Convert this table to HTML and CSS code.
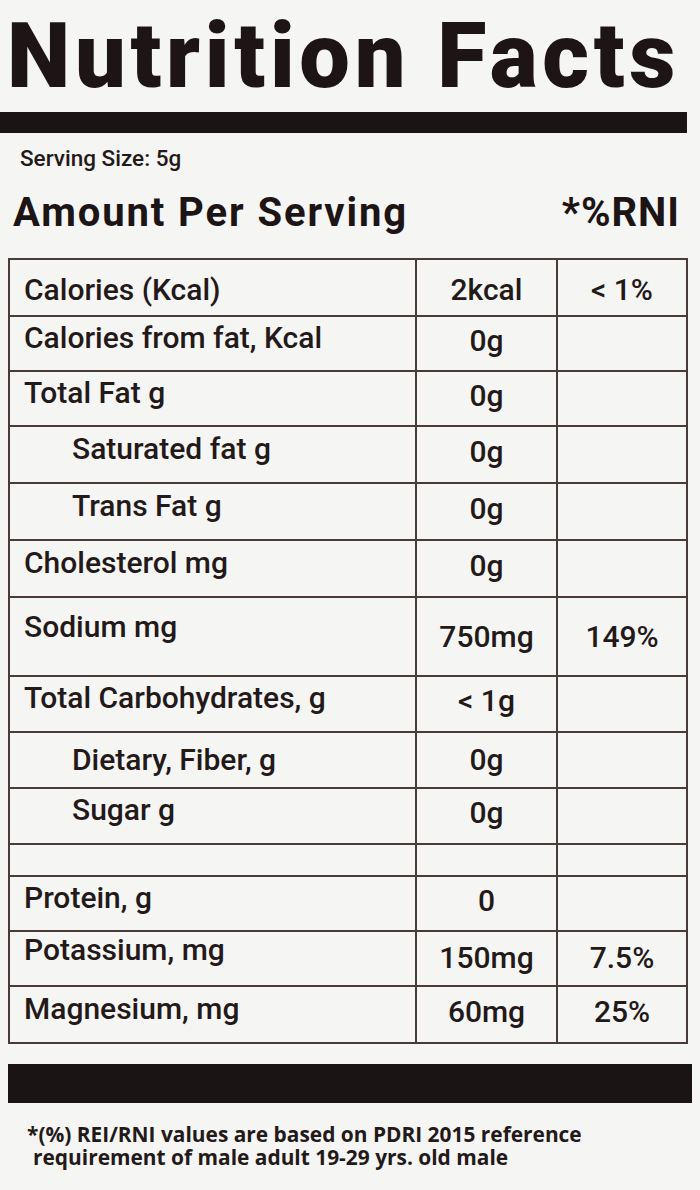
FILE: index.html
```html
<!DOCTYPE html>
<html lang="en">
<head>
<meta charset="utf-8">
<title>Nutrition Facts</title>
<link rel="stylesheet" href="styles.css">
</head>
<body>
<div class="label">
  <h1 class="title">Nutrition Facts</h1>
  <div class="bar bar-top"></div>
  <div class="serving">Serving Size: 5g</div>
  <div class="amount">
    <span>Amount Per Serving</span>
    <span class="rni">*%RNI</span>
  </div>

  <div class="table">
    <div class="row r1"><div class="name">Calories (Kcal)</div><div class="val">2kcal</div><div class="pct">&lt; 1%</div></div>
    <div class="row r2"><div class="name">Calories from fat, Kcal</div><div class="val">0g</div><div class="pct"></div></div>
    <div class="row r3"><div class="name">Total Fat g</div><div class="val">0g</div><div class="pct"></div></div>
    <div class="row r4"><div class="name sub">Saturated fat g</div><div class="val">0g</div><div class="pct"></div></div>
    <div class="row r5"><div class="name sub">Trans Fat g</div><div class="val">0g</div><div class="pct"></div></div>
    <div class="row r6"><div class="name">Cholesterol mg</div><div class="val">0g</div><div class="pct"></div></div>
    <div class="row r7"><div class="name">Sodium mg</div><div class="val">750mg</div><div class="pct">149%</div></div>
    <div class="row r8"><div class="name">Total Carbohydrates, g</div><div class="val">&lt; 1g</div><div class="pct"></div></div>
    <div class="row r9"><div class="name sub">Dietary, Fiber, g</div><div class="val">0g</div><div class="pct"></div></div>
    <div class="row r10"><div class="name sub">Sugar g</div><div class="val">0g</div><div class="pct"></div></div>
    <div class="row r11"><div class="name"></div><div class="val"></div><div class="pct"></div></div>
    <div class="row r12"><div class="name">Protein, g</div><div class="val">0</div><div class="pct"></div></div>
    <div class="row r13"><div class="name">Potassium, mg</div><div class="val">150mg</div><div class="pct">7.5%</div></div>
    <div class="row r14"><div class="name">Magnesium, mg</div><div class="val">60mg</div><div class="pct">25%</div></div>
  </div>

  <div class="bar bar-bottom"></div>
  <div class="note">
    <div class="note-line first">*(%) REI/RNI values are based on PDRI 2015 reference</div>
    <div class="note-line">requirement of male adult 19-29 yrs. old male</div>
  </div>
</div>
</body>
</html>
```

FILE: styles.css
```css
html, body {
  margin: 0;
  padding: 0;
  background: #f5f5f4;
}

body {
  width: 700px;
  height: 1190px;
  overflow: hidden;
  color: #231919;
  font-family: Roboto, "Liberation Sans", Arial, sans-serif;
}

.label {
  display: flex;
  flex-direction: column;
}

.title {
  margin: 12px 0 0 7px;
  font-size: 90px;
  line-height: 90px;
  font-weight: 900;
  letter-spacing: 4.7px;
  color: #1d1515;
}

.bar {
  background: #1b1414;
}

.bar-top {
  margin-top: 10px;
  width: 687px;
  height: 21px;
}

.serving {
  margin: 12px 0 0 20px;
  font-size: 22.5px;
  line-height: 26px;
  font-weight: 500;
}

.amount {
  margin: 20px 20px 0 13px;
  display: flex;
  justify-content: space-between;
  font-size: 40px;
  line-height: 44px;
  font-weight: 700;
  letter-spacing: 1.9px;
  color: #1d1515;
}

.amount .rni {
  letter-spacing: 1px;
}

.table {
  margin: 23px 0 0 8px;
  width: 680px;
  box-sizing: border-box;
  border: 2px solid #4a3a3a;
}

.row {
  display: grid;
  grid-template-columns: 405px 141px 1fr;
  box-sizing: border-box;
  border-top: 2px solid #4a3a3a;
  font-size: 30px;
  line-height: 34px;
  font-weight: 500;
}

.row > div {
  display: flex;
  align-items: center;
  padding-bottom: 12px;
}

.row .val,
.row .pct {
  justify-content: center;
  border-left: 2px solid #4a3a3a;
  padding-bottom: 6px;
}

.name {
  padding-left: 14px;
}

.name.sub {
  padding-left: 62px;
}

.r1 { border-top: 0; height: 55px; }
.r1 > div, .r1 .val, .r1 .pct { padding-bottom: 0; padding-top: 4px; }
.r2 { height: 55px; }
.r3 { height: 55px; }
.r4 { height: 57px; }
.r5 { height: 57px; }
.r6 { height: 57px; }
.r7 { height: 79px; }
.r7 > div.name { padding-bottom: 20px; }
.r7 .val, .r7 .pct { padding-bottom: 0; }
.r8 { height: 56px; }
.r9 { height: 56px; }
.r9 > div.name { padding-bottom: 0; }
.r9 .val { padding-bottom: 0; }
.r10 { height: 56px; }
.r11 { height: 32px; }
.r12 { height: 55px; }
.r13 { height: 55px; }
.r13 > div.name { padding-bottom: 18px; }
.r13 .val, .r13 .pct { padding-bottom: 2px; }
.r14 { height: 57px; }

.bar-bottom {
  margin: 20px 0 0 8px;
  width: 684px;
  height: 39px;
}

.note {
  margin-top: 20px;
  display: flex;
  flex-direction: column;
  padding-left: 33px;
  font-family: "Open Sans", "Liberation Sans", sans-serif;
  font-size: 20.9px;
  line-height: 23px;
  font-weight: 700;
  color: #231919;
}

.note-line.first {
  margin-left: -6px;
}
```
